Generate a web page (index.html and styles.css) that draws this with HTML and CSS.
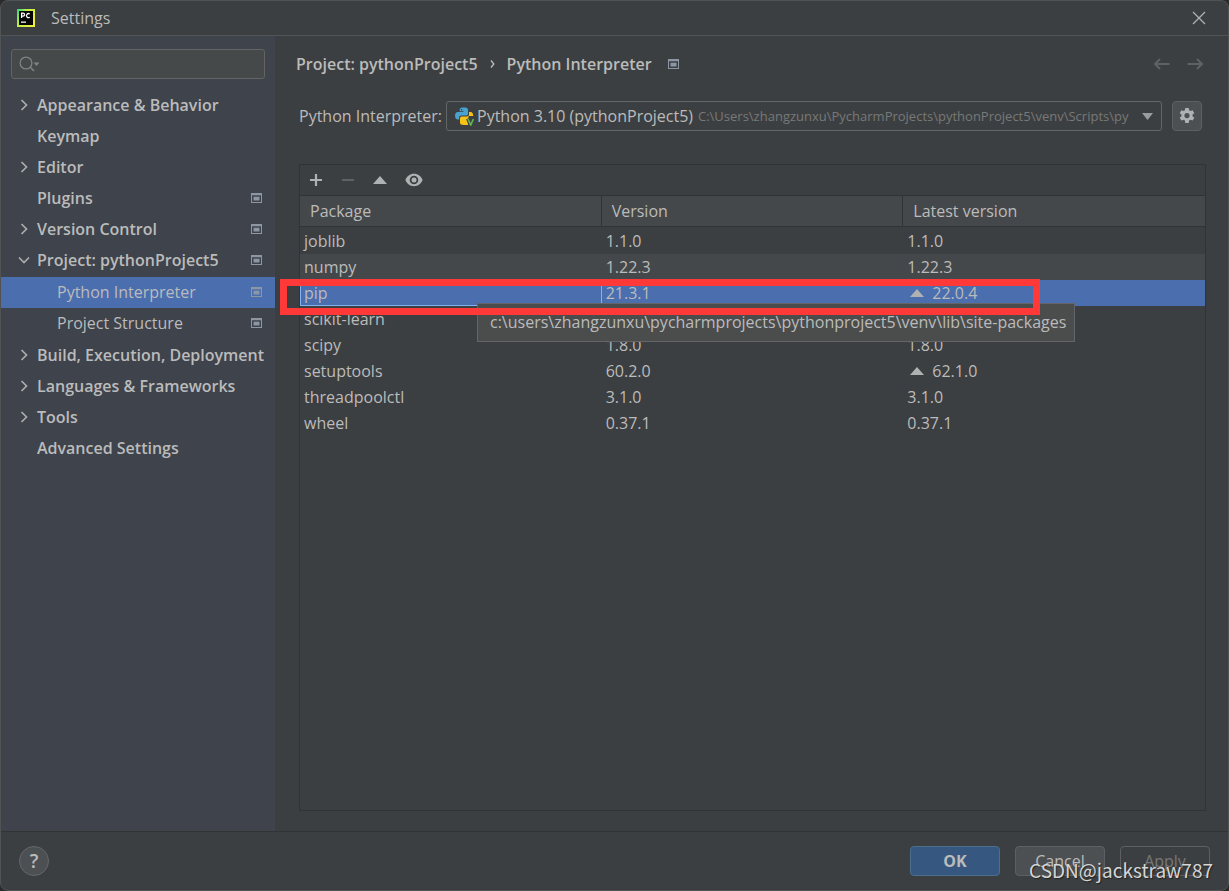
FILE: index.html
```html
<!DOCTYPE html>
<html lang="en">
<head>
<meta charset="utf-8">
<title>Settings</title>
<link rel="stylesheet" href="styles.css">
</head>
<body>
<svg class="defs" aria-hidden="true">
  <symbol id="chevron-right" viewBox="0 0 12 12"><path d="M3.5 1l5 5-5 5" fill="none" stroke="currentColor" stroke-width="1.700"/></symbol>
  <symbol id="chevron-down" viewBox="0 0 12 12"><path d="M1 3.500l5 5 5-5" fill="none" stroke="currentColor" stroke-width="1.700"/></symbol>
  <symbol id="project-badge" viewBox="0 0 11 10"><path d="M0 0h11v10H0zM1 2.300v6.700h9V2.300z" fill="currentColor" fill-rule="evenodd"/><path d="M2.500 3.700h6v3.800h-6z" fill="currentColor"/></symbol>
  <symbol id="upgrade" viewBox="0 0 14 8"><path d="M7 0l7 8H0z" fill="currentColor"/></symbol>
</svg>
<div class="window">
  <header class="titlebar">
    <svg class="app-icon" viewBox="0 0 18 18" aria-hidden="true">
      <defs><linearGradient id="pc" x1="0" y1="0" x2="1" y2="0.600"><stop offset="0" stop-color="#21d789"/><stop offset="0.400" stop-color="#b8ee45"/><stop offset="1" stop-color="#f2ee3c"/></linearGradient></defs>
      <path fill="url(#pc)" d="M0 0h18v18H0z"/><path fill="#050505" d="M2 2h14v14H2z"/>
      <path d="M4.600 9V4.200h1.500a1.400 1.400 0 0 1 0 2.900H4.700M12.700 5a2 2 0 1 0 0 3.200" fill="none" stroke="#fff" stroke-width="1.300"/>
      <path d="M4 12.500h5v1.200H4z" fill="#fff"/>
    </svg>
    <h1 class="title">Settings</h1>
    <button class="icon-button close" aria-label="Close"><svg width="14" height="14" viewBox="0 0 14 14"><path d="M1 1l12 12M13 1L1 13" stroke="currentColor" stroke-width="1.300"/></svg></button>
  </header>

  <div class="body">
    <aside class="sidebar">
      <label class="search">
        <svg width="22" height="16" viewBox="0 0 22 16" aria-hidden="true"><circle cx="7" cy="7" r="5.900" fill="none" stroke="currentColor" stroke-width="1.300"/><path d="M11 11l4 4" stroke="currentColor" stroke-width="1.600"/><path d="M14.500 6.500h6l-3 3.500z" fill="currentColor"/></svg>
        <input class="search-input" type="text" aria-label="Search settings">
      </label>
      <nav aria-label="Settings categories">
        <ul class="tree">
          <li><a class="node" href="#"><svg class="arrow"><use href="#chevron-right"/></svg><span class="name">Appearance &amp; Behavior</span></a></li>
          <li><a class="node" href="#"><span class="arrow"></span><span class="name">Keymap</span></a></li>
          <li><a class="node" href="#"><svg class="arrow"><use href="#chevron-right"/></svg><span class="name">Editor</span></a></li>
          <li><a class="node" href="#"><span class="arrow"></span><span class="name">Plugins</span><svg class="badge"><use href="#project-badge"/></svg></a></li>
          <li><a class="node" href="#"><svg class="arrow"><use href="#chevron-right"/></svg><span class="name">Version Control</span><svg class="badge"><use href="#project-badge"/></svg></a></li>
          <li><a class="node" href="#"><svg class="arrow"><use href="#chevron-down"/></svg><span class="name">Project: pythonProject5</span><svg class="badge"><use href="#project-badge"/></svg></a>
            <ul class="subtree">
              <li><a class="node child selected" href="#" aria-current="page"><span class="name">Python Interpreter</span><svg class="badge"><use href="#project-badge"/></svg></a></li>
              <li><a class="node child" href="#"><span class="name">Project Structure</span><svg class="badge"><use href="#project-badge"/></svg></a></li>
            </ul>
          </li>
          <li><a class="node" href="#"><svg class="arrow"><use href="#chevron-right"/></svg><span class="name">Build, Execution, Deployment</span></a></li>
          <li><a class="node" href="#"><svg class="arrow"><use href="#chevron-right"/></svg><span class="name">Languages &amp; Frameworks</span></a></li>
          <li><a class="node" href="#"><svg class="arrow"><use href="#chevron-right"/></svg><span class="name">Tools</span></a></li>
          <li><a class="node" href="#"><span class="arrow"></span><span class="name">Advanced Settings</span></a></li>
        </ul>
      </nav>
    </aside>

    <main class="content">
      <div class="crumbs">
        <span>Project: pythonProject5</span><svg class="crumb-sep" viewBox="0 0 5 8"><path d="M1 0.500L3.800 4 1 7.500" fill="none" stroke="currentColor" stroke-width="1.300"/></svg><span>Python Interpreter</span>
        <svg class="badge crumb-badge"><use href="#project-badge"/></svg>
        <div class="history">
          <button class="icon-button" aria-label="Back" disabled><svg width="17" height="12" viewBox="0 0 17 12"><path d="M16.500 6H2M7 1L2 6l5 5" fill="none" stroke="currentColor" stroke-width="2"/></svg></button>
          <button class="icon-button" aria-label="Forward" disabled><svg width="17" height="12" viewBox="0 0 17 12"><path d="M.5 6H15M10 1l5 5-5 5" fill="none" stroke="currentColor" stroke-width="2"/></svg></button>
        </div>
      </div>

      <div class="interpreter">
        <label for="interpreter">Python Interpreter:</label>
        <div class="combo">
          <svg class="python" viewBox="0 0 19 19" aria-hidden="true">
            <path fill="#4aa3cf" d="M8.500 0.500c3 0 4.500.5 4.500 2.500v3.500c0 1.500-1 2-2 2H6.500c-1.500 0-2.300.8-2.300 2v2H3C1 12.500 0 11 0 8.700S1 5 3 5h5.500v-.7H4.700V2.500C4.700 1 6 .5 8.500.5z"/>
            <path fill="#f6c218" d="M14 5h1.500c2 0 2.700 1.800 2.700 4H13.500l-.2 9H9c-3 0-4-.8-4-2.500V11.300C5 10 6 9.500 7 9.500h4.500c1.500 0 2.500-.8 2.500-2z"/>
            <circle cx="6.600" cy="2.700" r=".8" fill="#3c3f41"/>
            <path d="M13 11.500l2.800 7 2.800-7" fill="none" stroke="#3c3f41" stroke-width="4"/>
            <path d="M13 12l2.700 6 2.700-6" fill="none" stroke="#5fb552" stroke-width="1.700"/>
          </svg>
          <select class="combo-select" id="interpreter"><option>Python 3.10 (pythonProject5)</option></select>
          <span class="combo-path">C:\Users\zhangzunxu\PycharmProjects\pythonProject5\venv\Scripts\py</span>
          <svg class="combo-arrow" viewBox="0 0 11 7" aria-hidden="true"><path d="M0 0h11L5.500 7z" fill="currentColor"/></svg>
        </div>
        <button class="gear" aria-label="Interpreter settings"><svg width="16" height="16" viewBox="0 0 16 16"><path fill="currentColor" fill-rule="evenodd" d="M6.300 0h3.400l.4 2.300 1.300.8 2.200-.9 1.700 3-1.800 1.400v1.600l1.800 1.500-1.700 2.900-2.200-.8-1.300.8-.4 2.400H6.300l-.4-2.400-1.300-.8-2.200.8L.7 9.700l1.800-1.500V6.600L.7 5.200l1.700-3 2.200.9 1.300-.8zM8 5a2.600 2.600 0 1 0 0 5.200A2.600 2.600 0 0 0 8 5z"/></svg></button>
      </div>

      <section class="packages" aria-label="Installed packages">
        <div class="toolbar">
          <button class="icon-button" aria-label="Install"><svg width="14" height="14" viewBox="0 0 14 14"><path d="M7 1v12M1 7h12" stroke="currentColor" stroke-width="2.200"/></svg></button>
          <button class="icon-button" aria-label="Uninstall" disabled><svg width="14" height="14" viewBox="0 0 14 14"><path d="M1 7h12" stroke="currentColor" stroke-width="2.200"/></svg></button>
          <button class="icon-button" aria-label="Upgrade"><svg width="14" height="8"><use href="#upgrade"/></svg></button>
          <button class="icon-button" aria-label="Show early releases"><svg width="18" height="14" viewBox="0 0 18 14"><path fill="currentColor" fill-rule="evenodd" d="M9 .8c4 0 7.200 2.500 8.600 6.200C16.200 10.700 13 13.200 9 13.200S1.800 10.700.4 7C1.800 3.300 5 .8 9 .8zM9 2.700a4.300 4.300 0 1 0 0 8.600 4.300 4.300 0 0 0 0-8.600z"/><circle cx="9" cy="7" r="2.500" fill="currentColor"/></svg></button>
        </div>
        <table class="table">
          <thead><tr><th>Package</th><th>Version</th><th>Latest version</th></tr></thead>
          <tbody>
            <tr class="first"><td>joblib</td><td>1.1.0</td><td>1.1.0</td></tr>
            <tr class="hover"><td>numpy</td><td>1.22.3</td><td>1.22.3</td></tr>
            <tr class="current"><td class="focused">pip</td><td>21.3.1</td><td><svg class="upgrade"><use href="#upgrade"/></svg>22.0.4</td></tr>
            <tr><td>scikit-learn</td><td></td><td></td></tr>
            <tr><td>scipy</td><td>1.8.0</td><td>1.8.0</td></tr>
            <tr><td>setuptools</td><td>60.2.0</td><td><svg class="upgrade"><use href="#upgrade"/></svg>62.1.0</td></tr>
            <tr><td>threadpoolctl</td><td>3.1.0</td><td>3.1.0</td></tr>
            <tr><td>wheel</td><td>0.37.1</td><td>0.37.1</td></tr>
          </tbody>
        </table>
        <div class="tooltip" role="tooltip">c:\users\zhangzunxu\pycharmprojects\pythonproject5\venv\lib\site-packages</div>
        <div class="marker"></div>
      </section>
    </main>
  </div>

  <footer class="footer">
    <button class="help" aria-label="Help">?</button>
    <div class="actions">
      <button class="button primary">OK</button>
      <button class="button">Cancel</button>
      <button class="button" disabled>Apply</button>
    </div>
    <span class="watermark">CSDN@jackstraw787</span>
  </footer>
</div>
</body>
</html>
```
FILE: styles.css
```css
* { box-sizing: border-box; }

body {
  margin: 0;
  background: #2b2b2b;
  color: #bbbbbb;
  font: 16px/20px "Open Sans", "Noto Sans", sans-serif;
}

ul { list-style: none; margin: 0; padding: 0; }
svg { display: block; flex: none; }
button, input, select { font: inherit; color: inherit; }
.defs { position: absolute; width: 0; height: 0; }

.window {
  display: flex;
  flex-direction: column;
  min-height: 100vh;
  border: 1px solid #505254;
  border-radius: 8px;
  background: #3c3f41;
  overflow: hidden;
}

.titlebar {
  display: flex;
  align-items: center;
  height: 35px;
  padding: 0 22px 0 16px;
  border-bottom: 1px solid #515355;
}
.app-icon { width: 18px; height: 18px; }
.title { flex: 1; margin: 0 0 0 16px; font-size: 16px; font-weight: 400; }

.icon-button {
  display: flex;
  padding: 0;
  border: 0;
  background: none;
  color: #afb1b3;
}
.icon-button:disabled { color: #5f6163; }

.body { display: flex; flex: 1; }

.sidebar {
  flex: none;
  width: 274px;
  padding-top: 13px;
  background: #3e434c;
}
.search {
  display: flex;
  align-items: center;
  gap: 4px;
  height: 30px;
  margin: 0 10px 11px;
  padding: 0 7px;
  border: 1px solid #646464;
  border-radius: 3px;
  background: #45494a;
  color: #7f8386;
}
.search-input { flex: 1; min-width: 0; padding: 0; border: 0; outline: 0; background: none; }

.node {
  display: flex;
  align-items: center;
  height: 31px;
  padding: 0 13px 2px 17px;
  color: #bbbbbb;
  font-weight: 600;
  text-decoration: none;
}
.name { flex: 1; min-width: 0; white-space: nowrap; }
.arrow { flex: none; width: 12px; height: 12px; margin-right: 7px; color: #adadad; }
.badge { width: 11px; height: 10px; color: #8d97a3; }
.subtree { padding: 1px 0; }
.child { padding-left: 56px; font-weight: 400; }
.selected { background: #4b6eaf; }

.content {
  display: flex;
  flex-direction: column;
  flex: 1;
  min-width: 0;
  padding: 18px 22px 20px 21px;
}

.crumbs { display: flex; align-items: center; height: 20px; font-weight: 600; }
.crumb-sep { width: 5px; height: 8px; margin: 0 12px; }
.crumb-badge { margin-left: 16px; }
.history { display: flex; gap: 17px; margin: 0 2px 0 auto; }

.interpreter { display: flex; align-items: center; height: 30px; margin: 27px 4px 33px 3px; white-space: nowrap; }
.combo {
  display: flex;
  align-items: center;
  flex: 1;
  min-width: 0;
  height: 30px;
  margin: 0 10px 0 4px;
  padding: 0 8px;
  border: 1px solid #646668;
  border-radius: 3px;
}
.python { width: 19px; height: 19px; }
.combo-select { flex: none; margin: 0 4px 0 3px; padding: 0; border: 0; outline: 0; background: none; appearance: none; }
.combo-path { flex: 1; min-width: 0; overflow: hidden; color: #787878; font-size: 13px; }
.combo-arrow { width: 11px; height: 7px; margin-left: 8px; color: #9a9da0; }
.gear {
  display: grid;
  place-items: center;
  width: 30px;
  height: 30px;
  padding: 0;
  border: 1px solid #5e6060;
  border-radius: 4px;
  background: #4c5052;
  color: #afb1b3;
}

.packages { position: relative; flex: 1; margin-left: 3px; border: 1px solid #313335; }
.toolbar { display: flex; align-items: center; gap: 18px; height: 30px; padding: 0 9px; }

.table { width: 100%; table-layout: fixed; border-collapse: separate; border-spacing: 0; }
.table th {
  height: 32px;
  padding: 0 10px;
  border: solid #313335;
  border-width: 1px 1px 1px 0;
  background: #45484a;
  font-weight: 400;
  text-align: left;
}
.table th:last-child { border-right: 0; }
.table td { height: 26px; padding: 0 4px; white-space: nowrap; }
.first td { height: 27px; }
.hover td { background: #45484a; }
.current td { background: #4b6eaf; }
.table .focused { border: 1px solid #85b1f0; padding-left: 3px; }
.upgrade { display: inline-block; width: 14px; height: 8px; margin: 0 8px 2px 3px; color: #afb1b3; }

.tooltip {
  position: absolute;
  top: 138px;
  left: 177px;
  padding: 8px 8px 9px 12px;
  border: 1px solid #636569;
  background: #4b4d4d;
  white-space: nowrap;
}
.marker {
  position: absolute;
  top: 114px;
  left: -20px;
  right: 165px;
  height: 36px;
  border: 7px solid #ff3838;
}

.footer {
  position: relative;
  display: flex;
  align-items: center;
  justify-content: space-between;
  height: 59px;
  padding: 0 18px;
  border-top: 1px solid #313335;
}
.help {
  width: 30px;
  height: 30px;
  padding: 0;
  border: 1px solid #65686a;
  border-radius: 50%;
  background: #4c5052;
  font-size: 19px;
  font-weight: 600;
}
.actions { display: flex; gap: 15px; }
.button {
  width: 90px;
  height: 30px;
  padding: 0;
  border: 1px solid #5e6060;
  border-radius: 4px;
  background: #4c5052;
}
.button:disabled { background: none; color: #777777; }
.primary { border-color: #4c708c; background: #365880; font-weight: 700; }
.watermark {
  position: absolute;
  right: 15px;
  bottom: 6px;
  color: #d6d6d6;
  font: 19px/28px "Noto Sans CJK SC", sans-serif;
  text-shadow: 1px 1px 1px #222222;
}
```
